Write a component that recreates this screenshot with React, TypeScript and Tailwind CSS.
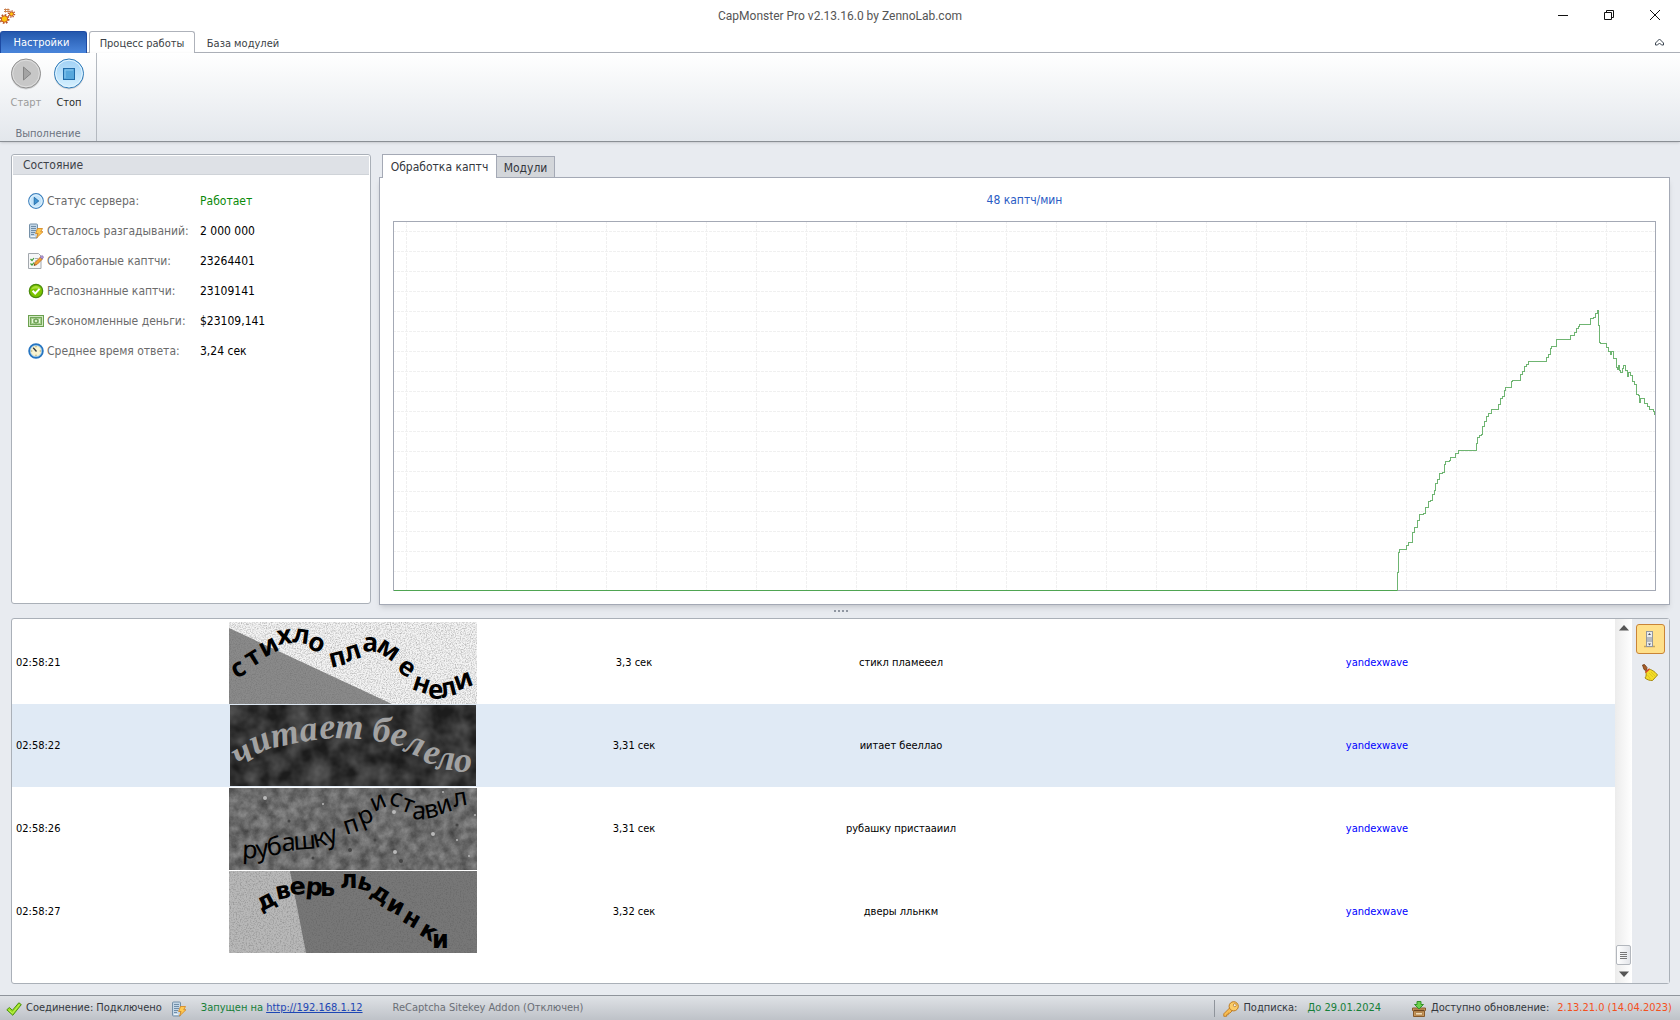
import { useState } from "react";
import type { ReactNode } from "react";

type LogRow = {
  time: string;
  duration: string;
  answer: string;
  module: string;
  image: ReactNode;
};

type Glyph = [string, number, number, number];

// [x, y] steps of the captcha rate, measured from the plot's top left
const RATE: [number, number][] = [
  [1004, 369], [1004, 351], [1005, 331], [1006, 328], [1011, 328], [1013, 324], [1015, 321], [1019, 317],
  [1019, 311], [1021, 306], [1024, 299], [1026, 293], [1030, 292], [1032, 286], [1035, 280], [1037, 279],
  [1039, 273], [1041, 269], [1042, 262], [1044, 258], [1046, 252], [1049, 251], [1051, 243], [1052, 240],
  [1056, 239], [1057, 236], [1060, 236], [1062, 232], [1065, 230], [1065, 229], [1082, 229], [1083, 222],
  [1084, 216], [1086, 214], [1088, 213], [1089, 205], [1091, 200], [1093, 195], [1095, 192], [1097, 192],
  [1098, 188], [1103, 188], [1105, 183], [1107, 177], [1109, 175], [1111, 169], [1112, 166], [1116, 166],
  [1118, 160], [1119, 159], [1125, 159], [1127, 153], [1129, 150], [1131, 145], [1133, 143], [1135, 140],
  [1151, 140], [1153, 136], [1155, 133], [1157, 127], [1158, 125], [1162, 125], [1163, 118], [1175, 118],
  [1177, 114], [1179, 114], [1181, 111], [1183, 107], [1185, 105], [1186, 103], [1195, 103], [1197, 97],
  [1200, 96], [1202, 92], [1204, 91], [1204, 89], [1205, 104], [1206, 121], [1207, 122], [1211, 122],
  [1213, 126], [1215, 130], [1217, 133], [1218, 130], [1220, 137], [1223, 146], [1224, 148], [1225, 144],
  [1226, 149], [1227, 151], [1229, 147], [1230, 144], [1232, 149], [1234, 155], [1235, 151], [1237, 154],
  [1239, 160], [1241, 163], [1243, 173], [1245, 174], [1246, 181], [1247, 177], [1249, 177], [1251, 182],
  [1254, 185], [1256, 188], [1260, 190], [1261, 193],
];

const ratePath = "M1004.5 369.5" + RATE.map(([x, y]) => `H${x + 0.5}V${y + 0.5}`).join("");

function GearsIcon() {
  return (
    <svg width="16" height="16" viewBox="0 0 16 16">
      <circle cx="4.500" cy="11" r="4" fill="none" stroke="#b5542c" strokeWidth="2" strokeDasharray="1.6 1.5" />
      <circle cx="4.500" cy="11" r="3.200" fill="#ffc40d" stroke="#c65a24" />
      <circle cx="11.500" cy="6" r="3" fill="none" stroke="#b5542c" strokeWidth="1.500" strokeDasharray="1.2 1.100" />
      <circle cx="11.500" cy="6" r="2" fill="#ffc40d" stroke="#c65a24" />
      <path d="M5.500 0.500v4M8 0.500v4M4 1.500h5.500M4 3.500h5.500" stroke="#cd8350" />
    </svg>
  );
}

function StartIcon() {
  return (
    <svg width="32" height="32" viewBox="0 0 32 32">
      <circle cx="16" cy="16.500" r="15" fill="#00000022" />
      <circle cx="16" cy="15.500" r="14.500" fill="#c7c7c7" stroke="#919191" />
      <circle cx="16" cy="15.500" r="13.300" fill="none" stroke="#dedede" />
      <path d="M13.500 9v13l7.500-6.500z" fill="#a4a4a4" stroke="#858585" />
    </svg>
  );
}

function StopIcon() {
  return (
    <svg width="32" height="32" viewBox="0 0 32 32">
      <defs>
        <linearGradient id="stopFill" x1="0" y1="0" x2="0" y2="1">
          <stop offset="0" stopColor="#9fd0f5" />
          <stop offset="1" stopColor="#d6f1ff" />
        </linearGradient>
      </defs>
      <circle cx="16" cy="16.500" r="15" fill="#00000022" />
      <circle cx="16" cy="15.500" r="14.500" fill="url(#stopFill)" stroke="#2f7ab8" />
      <circle cx="16" cy="15.500" r="13.300" fill="none" stroke="#e4f5ff" />
      <rect x="10.500" y="10.500" width="11" height="11" fill="#56a7dc" stroke="#1f6aa8" />
      <path d="M12 20v-8h8" fill="none" stroke="#8cc9ef" />
    </svg>
  );
}

function PlayIcon() {
  return (
    <svg width="16" height="16" viewBox="0 0 16 16">
      <circle cx="8" cy="8" r="7.300" fill="#c4e4fa" stroke="#3c80bd" strokeWidth="1.200" />
      <circle cx="8" cy="8" r="6.200" fill="none" stroke="#eef9ff" strokeWidth="0.800" />
      <path d="M6.200 4.300v7.400L10.800 8z" fill="#3f93d1" stroke="#1d64a3" strokeWidth="0.800" />
    </svg>
  );
}

function ServerIcon() {
  return (
    <svg width="16" height="16" viewBox="0 0 16 16">
      <rect x="1.500" y="1" width="8" height="14" rx="1" fill="#c3d6e6" stroke="#7590a8" />
      <path d="M3 3.500h5M3 5.500h5M3 7.500h5M3 9.500h4M3 11.500h3" stroke="#6f8da8" />
      <path d="M3 13.500h4" stroke="#eef5fa" />
      <path d="M9.500 5.500h5l-1.800 3.200h2.300L8.500 15l1.600-4.500H7.600z" fill="#ffcb52" stroke="#d68a28" strokeWidth="0.900" />
    </svg>
  );
}

function EditIcon() {
  return (
    <svg width="16" height="16" viewBox="0 0 16 16">
      <path d="M0.500 0.500h10l2.500 2.500v12.500H0.500z" fill="#f6f7f8" stroke="#a3a8ae" />
      <path d="M2.500 6l1.500 1.500L6 5M2.500 10.500L4 12l2-2.500" fill="none" stroke="#3f9a35" strokeWidth="1.200" />
      <path d="M7 5.500h3M7 8h2" stroke="#a8aeb5" />
      <path d="M6 12.500l1-3 5.500-5.500 2 2L9 11.500z" fill="#f5a234" stroke="#b5651b" strokeWidth="0.800" />
      <path d="M12 4.200l1.300-1.200q1-.6 1.700.2t.2 1.600L14.200 6z" fill="#b49bd4" stroke="#8065a8" strokeWidth="0.700" />
      <path d="M6 12.600l.5-1.500 1 1z" fill="#333" />
    </svg>
  );
}

function OkIcon() {
  return (
    <svg width="16" height="16" viewBox="0 0 16 16">
      <circle cx="8" cy="8" r="6.700" fill="#7cc400" stroke="#4b8c0e" strokeWidth="1.200" />
      <path d="M3 6.500a5.300 5.300 0 0 1 10 0q-5-2-10 0z" fill="#abe03c" />
      <path d="M4.600 7.800l2.600 2.700 4.300-4.600" fill="none" stroke="#fff" strokeWidth="2" />
    </svg>
  );
}

function MoneyIcon() {
  return (
    <svg width="16" height="16" viewBox="0 0 16 16">
      <rect x="0.500" y="2.500" width="15" height="11" fill="#cfe8bf" stroke="#6ba04f" />
      <rect x="2.500" y="4.500" width="11" height="7" fill="#a5cf8d" stroke="#74a65a" />
      <circle cx="8" cy="8" r="2" fill="#d5edc6" stroke="#568b3d" />
      <path d="M4.500 6v4M11.500 6v4" stroke="#e6f5db" />
    </svg>
  );
}

function ClockIcon() {
  return (
    <svg width="16" height="16" viewBox="0 0 16 16">
      <circle cx="8" cy="8" r="6.800" fill="#fbf4cf" stroke="#2675c2" strokeWidth="1.900" />
      <circle cx="8" cy="8" r="5.600" fill="none" stroke="#8cc0ec" strokeWidth="0.700" />
      <path d="M8 3v1.300M8 11.700V13M3 8h1.300M11.700 8H13" stroke="#a79b5e" />
      <path d="M5.200 4.800L8.500 8.500" stroke="#2f3640" strokeWidth="1.300" />
    </svg>
  );
}

function CheckIcon() {
  return (
    <svg width="16" height="16" viewBox="0 0 16 16">
      <path d="M0.800 8.800l2.600-2.300 3 2.800 6.400-7.500 2.500 1.800L6.800 14.300z" fill="#9be01e" stroke="#4b9111" />
      <path d="M2.500 8.800l4 3.500 7-8.800" fill="none" stroke="#c9f36b" strokeWidth="0.800" />
    </svg>
  );
}

function KeyIcon() {
  return (
    <svg width="16" height="16" viewBox="0 0 16 16">
      <path d="M6.800 6.800L0.800 12.800v2.500h2.800v-1.500h1.600v-1.600h1.600l2.500-2.500z" fill="#f8bd52" stroke="#bd7b22" strokeWidth="0.900" />
      <circle cx="10.700" cy="5.300" r="4.600" fill="#fbcc68" stroke="#bd7b22" />
      <circle cx="11.800" cy="4.200" r="1.500" fill="#f1f1ef" stroke="#bd7b22" strokeWidth="0.800" />
    </svg>
  );
}

function UpdateIcon() {
  return (
    <svg width="16" height="16" viewBox="0 0 16 16">
      <path d="M1.500 7h13v2.500h-1v6h-11v-6h-1z" fill="#c9975a" stroke="#85592a" />
      <path d="M3 9.500h10" stroke="#6b4520" strokeWidth="1.500" />
      <path d="M4.500 11.500h7v2.500h-7z" fill="#f0dcb8" stroke="#a87a42" strokeWidth="0.800" />
      <path d="M6 0.500h4v3h2.500L8 8 3.500 3.500H6z" fill="#6bd14d" stroke="#35912a" />
    </svg>
  );
}

function ScrollIcon() {
  return (
    <svg width="12" height="17" viewBox="0 0 12 17">
      <path d="M0 15.500h11" stroke="#c8a557" strokeWidth="1.500" />
      <rect x="2.500" y="0.500" width="6" height="15" fill="#e9ebee" stroke="#93979d" />
      <rect x="3" y="6" width="5" height="5" fill="#b6bac0" />
      <path d="M4 4h3L5.500 2zM4 12.500h3l-1.500 2z" fill="#555" />
    </svg>
  );
}

function BroomIcon() {
  return (
    <svg width="18" height="18" viewBox="0 0 18 18">
      <path d="M1.500 1l2-.5 2.500 3-.5 3.500-2.500-1.500z" fill="#a85d27" stroke="#6c3813" strokeWidth="0.800" />
      <path d="M4.500 7.500l4-2.500c2 1 5 2 8 6l-5 5.500c-3 0-5-.5-7.500-2.500 1.500-2 1.500-4 .5-6.500z" fill="#f4dc25" stroke="#a58a12" />
      <path d="M8 9l4 4M10 8l4 4M6.500 11l3 4" stroke="#dcc423" />
      <path d="M4.500 8.500l3.800-3.500" stroke="#d8402c" strokeWidth="1.500" />
    </svg>
  );
}

// Letters of a captcha, each at its own place and angle
function WavyText({ glyphs, className }: { glyphs: Glyph[]; className: string }) {
  return (
    <text
      className={className}
      x={glyphs.map((g) => g[1]).join(" ")}
      y={glyphs.map((g) => g[2]).join(" ")}
      rotate={glyphs.map((g) => g[3]).join(" ")}
    >
      {glyphs.map((g) => g[0]).join("")}
    </text>
  );
}

function CaptchaOne() {
  return (
    <svg className="overflow-visible" width="248" height="82" viewBox="0 0 248 82" role="img" aria-label="captcha">
      <filter id="grainOne" x="0" y="0" width="1" height="1" colorInterpolationFilters="sRGB">
        <feTurbulence type="fractalNoise" baseFrequency="0.8" numOctaves="2" />
        <feColorMatrix values="0 0 0 0 0.4  0 0 0 0 0.4  0 0 0 0 0.4  1 0 0 0 -0.400" />
      </filter>
      <rect width="248" height="82" fill="#f4f4f4" />
      <path d="M0 6L163 82H0z" fill="#8a8a8a" />
      <rect width="248" height="82" filter="url(#grainOne)" />
      <WavyText
        className="fill-black font-['Open_Sans',sans-serif] text-[26px] font-bold"
        glyphs={[
          ["с", 7, 57, -28], ["т", 22, 46, -32], ["и", 35, 36, -28], ["х", 49, 23, -8], ["л", 63, 20, 8],
          ["о", 77, 25, 26], [" ", 90, 30, 0], ["п", 102, 46, -14], ["л", 118, 40, -18], ["а", 133, 29, 4],
          ["м", 146, 28, 34], ["е", 167, 48, 34], ["н", 182, 67, 18], ["е", 199, 77, 0], ["л", 213, 76, -14],
          ["и", 228, 69, -20],
        ]}
      />
    </svg>
  );
}

function CaptchaTwo() {
  return (
    <svg className="overflow-visible" width="246" height="81" viewBox="0 0 246 81" role="img" aria-label="captcha">
      <filter id="cloud" x="0" y="0" width="1" height="1" colorInterpolationFilters="sRGB">
        <feTurbulence type="fractalNoise" baseFrequency="0.05" numOctaves="3" seed="4" />
        <feColorMatrix values="0 0 0 0 0.35  0 0 0 0 0.35  0 0 0 0 0.35  1.600 0 0 0 -0.4" />
      </filter>
      <rect width="246" height="81" fill="#1c1c1c" />
      <rect width="246" height="81" filter="url(#cloud)" />
      <WavyText
        className="fill-[#a2a2a2] font-['Liberation_Serif',serif] text-[36px] font-bold italic"
        glyphs={[
          ["ч", 9, 62, -30], ["и", 25, 50, -24], ["т", 43, 43, -12], ["а", 71, 37, -8], ["е", 90, 34, -4],
          ["т", 105, 33, 2], [" ", 134, 34, 0], ["б", 142, 36, 4], ["е", 159, 39, 12], ["л", 173, 46, 20],
          ["е", 192, 57, 12], ["л", 206, 64, 4], ["о", 224, 67, 0],
        ]}
      />
    </svg>
  );
}

function CaptchaThree() {
  return (
    <svg className="overflow-visible" width="248" height="82" viewBox="0 0 248 82" role="img" aria-label="captcha">
      <filter id="stone" x="0" y="0" width="1" height="1" colorInterpolationFilters="sRGB">
        <feTurbulence type="fractalNoise" baseFrequency="0.1" numOctaves="5" seed="9" />
        <feColorMatrix values="0.4 0 0 0 0.22  0.4 0 0 0 0.22  0.4 0 0 0 0.22  0 0 0 0 0.9" />
      </filter>
      <rect width="248" height="82" fill="#6a6a6a" />
      <rect width="248" height="82" filter="url(#stone)" />
      <g fill="#b9b9b9">
        <circle cx="36" cy="10" r="2" />
        <circle cx="165" cy="24" r="2" />
        <circle cx="204" cy="46" r="2" />
        <circle cx="166" cy="64" r="2" />
        <circle cx="246" cy="27" r="1" />
        <circle cx="214" cy="4" r="1" />
        <circle cx="240" cy="68" r="1" />
        <circle cx="94" cy="16" r="1" />
        <circle cx="228" cy="52" r="1" />
      </g>
      <g fill="#444">
        <circle cx="60" cy="33" r="1.500" />
        <circle cx="121" cy="62" r="2" />
        <circle cx="146" cy="52" r="1.500" />
        <circle cx="84" cy="70" r="1.500" />
        <circle cx="172" cy="73" r="2" />
        <circle cx="228" cy="37" r="1.500" />
      </g>
      <WavyText
        className="fill-black font-['Noto_Sans',sans-serif] text-[25px]"
        glyphs={[
          ["р", 13, 70, 2], ["у", 28, 70, -8], ["б", 39, 68, -8], ["а", 53, 63, -2], ["ш", 65, 62, -4],
          ["к", 86, 60, -14], ["у", 98, 57, -18], [" ", 108, 50, 0], ["п", 117, 47, -18], ["р", 132, 38, -22],
          ["и", 145, 24, -24], ["с", 159, 16, 18], ["т", 171, 22, 20], ["а", 183, 31, 2], ["в", 197, 31, -12],
          ["и", 210, 27, -18], ["л", 225, 19, -10],
        ]}
      />
    </svg>
  );
}

function CaptchaFour() {
  return (
    <svg className="overflow-visible" width="248" height="82" viewBox="0 0 248 82" role="img" aria-label="captcha">
      <filter id="grainFour" x="0" y="0" width="1" height="1" colorInterpolationFilters="sRGB">
        <feTurbulence type="fractalNoise" baseFrequency="0.7" numOctaves="2" seed="3" />
        <feColorMatrix values="0 0 0 0 0.3  0 0 0 0 0.3  0 0 0 0 0.3  0.800 0 0 0 -0.35" />
      </filter>
      <rect width="248" height="82" fill="#777" />
      <path d="M0 0H61L77 82H0z" fill="#b8b8b8" />
      <rect width="248" height="82" filter="url(#grainFour)" />
      <WavyText
        className="fill-black font-['DejaVu_Sans',sans-serif] text-[24px] font-bold"
        glyphs={[
          ["д", 32, 41, -28], ["в", 48, 29, -12], ["е", 61, 24, -4], ["р", 76, 23, 6], ["ь", 91, 25, 0],
          [" ", 105, 20, 0], ["л", 111, 17, 0], ["ь", 127, 17, 16], ["д", 140, 24, 32], ["и", 156, 38, 26],
          ["н", 172, 50, 30], ["к", 189, 63, 30], ["и", 203, 77, 0],
        ]}
      />
    </svg>
  );
}

const STATUS = [
  { icon: <PlayIcon />, label: "Статус сервера:", value: "Работает", color: "text-[#0a8a0a]" },
  { icon: <ServerIcon />, label: "Осталось разгадываний:", value: "2 000 000", color: "text-black" },
  { icon: <EditIcon />, label: "Обработаные каптчи:", value: "23264401", color: "text-black" },
  { icon: <OkIcon />, label: "Распознанные каптчи:", value: "23109141", color: "text-black" },
  { icon: <MoneyIcon />, label: "Сэкономленные деньги:", value: "$23109,141", color: "text-black" },
  { icon: <ClockIcon />, label: "Среднее время ответа:", value: "3,24 сек", color: "text-black" },
];

const LOG: LogRow[] = [
  { time: "02:58:21", duration: "3,3 сек", answer: "стикл пламееел", module: "yandexwave", image: <CaptchaOne /> },
  { time: "02:58:22", duration: "3,31 сек", answer: "иитает бееллао", module: "yandexwave", image: <CaptchaTwo /> },
  { time: "02:58:26", duration: "3,31 сек", answer: "рубашку пристааиил", module: "yandexwave", image: <CaptchaThree /> },
  { time: "02:58:27", duration: "3,32 сек", answer: "дверы лльнкм", module: "yandexwave", image: <CaptchaFour /> },
];

function TitleBar() {
  return (
    <header className="flex h-[31px] shrink-0 items-center bg-white">
      <div className="w-[140px] pt-px">
        <GearsIcon />
      </div>
      <h1 className="flex-1 text-center font-['Roboto',sans-serif] text-[12px] text-[#555]">
        CapMonster Pro v2.13.16.0 by ZennoLab.com
      </h1>
      <div className="flex w-[140px] justify-end pr-[2px] pb-[2px]">
        <button type="button" aria-label="Свернуть" className="flex h-7 w-[46px] items-center justify-center">
          <svg width="10" height="10" viewBox="0 0 10 10">
            <path d="M0 5.500h10" stroke="#111" />
          </svg>
        </button>
        <button type="button" aria-label="Восстановить" className="flex h-7 w-[46px] items-center justify-center">
          <svg width="10" height="10" viewBox="0 0 10 10" fill="none" stroke="#111">
            <path d="M0.500 2.500h7v7h-7zM2.500 2.500v-2h7v7h-2" />
          </svg>
        </button>
        <button type="button" aria-label="Закрыть" className="flex h-7 w-[46px] items-center justify-center">
          <svg width="10" height="10" viewBox="0 0 10 10">
            <path d="M0 0l10 10M10 0L0 10" stroke="#111" />
          </svg>
        </button>
      </div>
    </header>
  );
}

function Ribbon() {
  return (
    <>
      <nav className="flex h-[22px] shrink-0 bg-white text-[11px] text-[#3b3f46]">
        <button
          type="button"
          className="w-[87px] rounded-t-[3px] border border-b-0 border-[#1d4aa3] bg-linear-to-b from-[#2458ad] to-[#4a86dc] pt-[2px] pr-1 text-white"
        >
          Настройки
        </button>
        <div className="w-[2px] border-b border-[#aeb2ba]" />
        <button type="button" className="w-[106px] rounded-t-[3px] border border-b-0 border-[#aeb2ba] bg-white pt-[3px]">
          Процесс работы
        </button>
        <button type="button" className="w-[96px] border-b border-[#aeb2ba] pt-[5px]">
          База модулей
        </button>
        <div className="flex flex-1 items-center justify-end border-b border-[#aeb2ba] pr-4">
          <button type="button" aria-label="Свернуть ленту">
            <svg width="9" height="8" viewBox="0 0 9 8" fill="none" stroke="#3b4450">
              <path d="M0.500 5l4-4 4 4v2H6.500l-2-2-2 2h-2z" />
            </svg>
          </button>
        </div>
      </nav>
      <section className="flex shrink-0 border-b border-[#8a8f95] bg-linear-to-b from-white to-[#e3e7ec] text-[11px] shadow">
        <div className="flex h-[88px] w-[97px] flex-col border-r border-[#b4b9c0] pt-[5px]">
          <div className="flex px-[5px]">
            <button type="button" disabled className="flex w-[42px] flex-col items-center gap-[5px] text-[#9b9b9b]">
              <StartIcon />
              Старт
            </button>
            <button type="button" className="flex w-[44px] flex-col items-center gap-[5px] text-[#2b2b2b]">
              <StopIcon />
              Стоп
            </button>
          </div>
          <span className="mt-auto text-center leading-[15px] text-[#6b7380]">Выполнение</span>
        </div>
      </section>
    </>
  );
}

function StatusPanel() {
  return (
    <section className="flex w-[360px] flex-col rounded-[3px] border border-[#aab0b8] bg-white">
      <h2 className="m-px mb-0 h-[19px] border-b border-[#cfd3d8] bg-[#dee1e6] pl-[10px] text-[12px] leading-[18px] text-[#3d4148]">
        Состояние
      </h2>
      <dl className="pt-[11px] pl-4 text-[12px]">
        {STATUS.map((s) => (
          <div key={s.label} className="flex h-[30px] items-center">
            <dt className="flex w-[172px] items-center gap-[3px] whitespace-nowrap text-[#6b6b6b]">
              {s.icon}
              {s.label}
            </dt>
            <dd className={s.color}>{s.value}</dd>
          </div>
        ))}
      </dl>
    </section>
  );
}

function RateChart() {
  return (
    <svg
      className="block min-h-0 w-full flex-1"
      viewBox="0 0 1263 370"
      preserveAspectRatio="none"
      shapeRendering="crispEdges"
      role="img"
      aria-label="Обработка каптч"
    >
      <g stroke="#f0f0f0" strokeDasharray="3 1">
        {Array.from({ length: 25 }, (_, i) => (
          <path key={"v" + i} d={`M${13.5 + i * 50} 0V370`} />
        ))}
        {Array.from({ length: 18 }, (_, i) => (
          <path key={"h" + i} d={`M0 ${10.5 + i * 20}H1263`} />
        ))}
      </g>
      <rect x="0.500" y="0.500" width="1262" height="369" stroke="#a4a9b5" fill="none" />
      <path d="M1 369.500H1004" stroke="#4fa552" fill="none" />
      <path d={ratePath} stroke="#6fb572" fill="none" />
    </svg>
  );
}

function ChartPanel() {
  const [tab, setTab] = useState("captcha");

  return (
    <section className="-mb-px flex min-w-0 flex-1 flex-col">
      <div role="tablist" className="relative z-10 -mb-px flex items-end pl-[3px] text-[12px] text-[#33373d]">
        <button
          type="button"
          role="tab"
          aria-selected={tab === "captcha"}
          className="h-[24px] w-[115px] border border-b-0 border-[#a4a9b5] bg-white"
          onClick={() => setTab("captcha")}
        >
          Обработка каптч
        </button>
        <button
          type="button"
          role="tab"
          aria-selected={tab === "modules"}
          className="h-[22px] w-[58px] border border-l-0 border-[#a4a9b5] bg-[#d3d6da] pt-px"
          onClick={() => setTab("modules")}
        >
          Модули
        </button>
      </div>
      <div className="flex min-h-0 flex-1 flex-col border border-[#a4a9b5] bg-white px-[13px] pb-[13px] shadow-md">
        <p className="h-[43px] text-center text-[12px] leading-[45px] text-[#2a5cc4]">48 каптч/мин</p>
        <RateChart />
      </div>
    </section>
  );
}

function LogPanel() {
  return (
    <section className="flex min-h-0 rounded-[3px] border border-[#aab0b8] bg-white">
      <div className="min-w-0 flex-1 overflow-hidden pt-[2px]">
        <table className="w-full table-fixed border-collapse text-[11px] text-black">
          <colgroup>
            <col className="w-[89px]" />
            <col className="w-[504px]" />
            <col className="w-[58px]" />
            <col />
            <col />
          </colgroup>
          <tbody>
            {LOG.map((row, i) => (
              <tr key={row.time} className={i === 1 ? "h-[83px] bg-[#e0eaf5]" : "h-[83px]"}>
                <td className="p-0 pt-[2px] pl-1">{row.time}</td>
                <td className="p-0 [&>svg]:mx-auto [&>svg]:block">{row.image}</td>
                <td className="p-0 pt-[2px] text-center whitespace-nowrap">{row.duration}</td>
                <td className="p-0 pt-[2px] text-center">{row.answer}</td>
                <td className="p-0 pt-[2px] text-center">
                  <a href="#yandexwave" className="text-[#0000ff]">
                    {row.module}
                  </a>
                </td>
              </tr>
            ))}
          </tbody>
        </table>
      </div>
      <div className="flex w-[17px] flex-col items-center bg-linear-to-r from-[#ececec] to-white py-[6px]">
        <button type="button" aria-label="Вверх">
          <svg width="10" height="6" viewBox="0 0 10 6">
            <path d="M0 5.500h10L5 0z" fill="#555" />
          </svg>
        </button>
        <div className="mt-auto mb-[6px] flex h-[20px] w-[15px] flex-col items-center justify-center gap-px rounded-[2px] border border-[#b3b7bd] bg-linear-to-r from-white to-[#e4e6ea]">
          <span className="h-px w-[7px] bg-[#777]" />
          <span className="h-px w-[7px] bg-[#777]" />
          <span className="h-px w-[7px] bg-[#777]" />
          <span className="h-px w-[7px] bg-[#777]" />
        </div>
        <button type="button" aria-label="Вниз">
          <svg width="10" height="6" viewBox="0 0 10 6">
            <path d="M0 0.500h10L5 6z" fill="#555" />
          </svg>
        </button>
      </div>
      <div className="flex w-[37px] flex-col items-center gap-[10px] bg-[#e8ebf0] pt-[5px] pr-px">
        <button
          type="button"
          aria-label="Автопрокрутка"
          className="flex h-[30px] w-[29px] items-center justify-center rounded-[3px] border border-[#c98437] bg-[#ffe08a]"
        >
          <ScrollIcon />
        </button>
        <button type="button" aria-label="Очистить">
          <BroomIcon />
        </button>
      </div>
    </section>
  );
}

function StatusBar() {
  return (
    <footer className="flex h-[25px] shrink-0 items-center border-t border-[#8f949b] bg-linear-to-b from-[#dfe2e6] to-[#bec2c8] pt-px pr-2 pl-[6px] text-[11px] whitespace-nowrap text-[#33373d]">
      <div className="flex items-center gap-1">
        <CheckIcon />
        Соединение: Подключено
      </div>
      <div className="ml-[9px] flex items-center">
        <ServerIcon />
        <span className="ml-[14px] text-[#168038]">Запущен на</span>
        <a href="http://192.168.1.12" className="ml-[3px] text-[#1d46b4] underline">
          http://192.168.1.12
        </a>
      </div>
      <span className="ml-[30px] text-[#6b6f76]">ReCaptcha Sitekey Addon (Отключен)</span>
      <div className="ml-auto flex items-center gap-1 border-l border-[#8f949b] pl-2">
        <KeyIcon />
        Подписка:
        <span className="ml-[6px] text-[#168038]">До 29.01.2024</span>
      </div>
      <div className="ml-[30px] flex items-center gap-1">
        <UpdateIcon />
        Доступно обновление:
        <span className="ml-1 text-[#f4511e]">2.13.21.0 (14.04.2023)</span>
      </div>
    </footer>
  );
}

export default function App() {
  return (
    <div className="flex h-screen min-h-[700px] flex-col bg-[#e8ebf0] font-['DejaVu_Sans_Condensed','Noto_Sans',sans-serif]">
      <TitleBar />
      <Ribbon />
      <main className="grid min-h-0 flex-1 grid-rows-[minmax(0,75fr)_14px_minmax(0,61fr)] pt-3 pr-[10px] pb-[11px] pl-[11px]">
        <div className="flex min-h-0 gap-2">
          <StatusPanel />
          <ChartPanel />
        </div>
        <div className="flex items-center justify-center gap-[2px]">
          <span className="size-[2px] bg-[#8f96a1]" />
          <span className="size-[2px] bg-[#8f96a1]" />
          <span className="size-[2px] bg-[#8f96a1]" />
          <span className="size-[2px] bg-[#8f96a1]" />
        </div>
        <LogPanel />
      </main>
      <StatusBar />
    </div>
  );
}
